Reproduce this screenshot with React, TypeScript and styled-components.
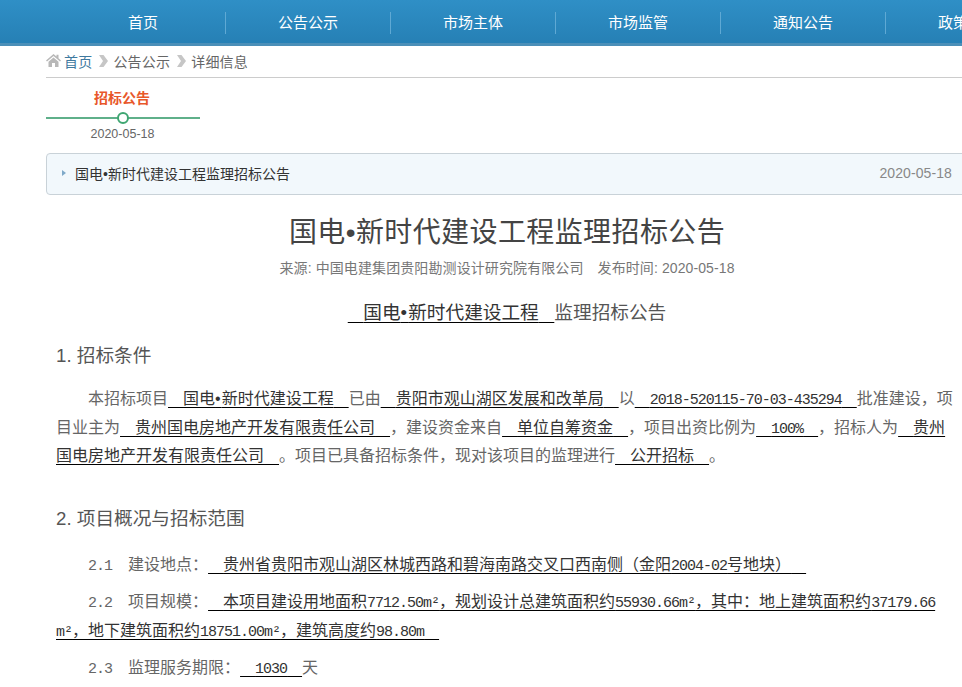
import React from "react";
import styled, { createGlobalStyle } from "styled-components";

const Global = createGlobalStyle`
  html, body { margin: 0; padding: 0; background: #fff; overflow: hidden; width: 962px; height: 687px; }
  body { font-family: "Liberation Sans", "Noto Sans CJK SC", sans-serif; color: #555; }
`;
const Page = styled.div`width: 962px; height: 687px; overflow: hidden;`;
const Nav = styled.nav`
  display: flex; height: 43px; padding-left: 61px; overflow: hidden;
  background: linear-gradient(#2f8fc6, #2680b5);
  border-bottom: 3px solid #4b8fb8;
`;
const NavItem = styled.a`
  flex: 0 0 165px; box-sizing: border-box; display: flex; align-items: center; justify-content: center;
  position: relative; color: #fff; font-size: 15px; height: 43px; padding-right: 1px;
  &:not(:last-child)::after {
    content: ""; position: absolute; right: 0; top: 12px; height: 22px; width: 1px; background: #5fa9d4;
  }
`;
const Content = styled.main`width: 930px; margin-left: 46px;`;
const Crumbs = styled.div`
  display: flex; align-items: center; box-sizing: border-box; height: 32px; padding-bottom: 2px;
  border-bottom: 1px solid #ccc; font-size: 14px; color: #666; width: 916px; letter-spacing: 0.2px;
`;
const CrumbLink = styled.span<{ $blue?: boolean }>`color: ${p => (p.$blue ? "#3f7a9f" : "#666")};`;
const HomeSvg = styled.svg`margin-right: 3px; flex: none;`;
const ChevronSvg = styled.svg`margin: 0 5px 0 7px; flex: none;`;
const Timeline = styled.div`width: 154px; margin-top: 10px; text-align: center;`;
const TimelineTitle = styled.div`font-size: 14px; font-weight: bold; color: #e8572a; line-height: 20px; margin-right: 2px;`;
const TimelineLine = styled.div`
  position: relative; height: 2px; background: #5fb08a; margin-top: 9px;
  &::after {
    content: ""; position: absolute; left: 71px; top: -5px; width: 8px; height: 8px;
    border: 2px solid #3fa672; border-radius: 50%; background: #fff;
  }
`;
const TimelineDate = styled.div`font-size: 12.5px; color: #666; margin-top: 8px; line-height: 14px; margin-right: 1px;`;
const NoticeCard = styled.div`
  display: flex; align-items: center; justify-content: space-between; box-sizing: border-box;
  height: 42px; margin-top: 12px; padding: 0 23px 2px 15px;
  background: #f2f8fc; border: 1px solid #c9d2d8; border-radius: 4px;
  font-size: 14px; color: #333;
`;
const NoticeTitle = styled.span`display: flex; align-items: center; gap: 9px;`;
const NoticeMark = styled.i`
  width: 0; height: 0; border-left: 4px solid #7fa9c9;
  border-top: 3.5px solid transparent; border-bottom: 3.5px solid transparent;
`;
const NoticeDate = styled.span`font-size: 14px; color: #888; letter-spacing: 0.1px;`;
const Article = styled.article`width: 922px;`;
const Title = styled.h1`
  margin: 18px 0 0; font-size: 28px; font-weight: 400; color: #444; text-align: center; line-height: 40px;
  letter-spacing: 0.4px;
`;
const Meta = styled.div`
  margin-top: 5px; font-size: 14px; color: #777; text-align: center; line-height: 20px; letter-spacing: 0.1px;
  span + span { margin-left: 14px; }
`;
const SubTitle = styled.h2`
  margin: 22px 0 0; font-size: 18.67px; font-weight: 400; color: #555; text-align: center; line-height: 26px;
`;
const Mark = styled.span`color: #333; text-decoration: underline; text-decoration-color: #000; text-underline-offset: 3px;`;
const Pad = styled.span`letter-spacing: 0.55px;`;
const Dot = styled.span`letter-spacing: 1px;`;
const Section = styled.h3<{ $gap: number }>`
  margin: ${p => p.$gap}px 0 0 10px; font-size: 18.67px; font-weight: 400; color: #555; line-height: 26px;
`;
const Para = styled.p<{ $gap: number }>`
  margin: ${p => p.$gap}px 0 0 10px; width: 900px; font-size: 16px; line-height: 28.5px; color: #666;
  text-indent: 32px;
`;
const Latin = styled.span`font-family: "Liberation Mono", monospace; font-size: 15px; letter-spacing: -1px; line-height: 1;`;

const T = ({ children }: { children: string }) => (
  <>
    {children.split(/([\x20-\x7e\u00a0\u00b2]+)/).map((s, i) =>
      i % 2 ? <Latin key={i}>{s}</Latin> : s
    )}
  </>
);
const SP = "\u00a0\u00a0\u00a0";
const U = ({ children }: { children: React.ReactNode }) => (
  <Mark><Pad>{SP}</Pad>{typeof children === "string" ? <T>{children}</T> : children}<Pad>{SP}</Pad></Mark>
);

const HomeIcon = () => (
  <HomeSvg width="15" height="13" viewBox="0 0 15 13" fill="#b8b8b8">
    <path d="M7.5 0 L0 6.5 L1 7.5 L7.5 2 L14 7.5 L15 6.5 L12.5 4.3 V0.8 H10.5 V2.6 Z" />
    <path d="M2.5 7.8 L7.5 3.5 L12.5 7.8 V13 H9 V9 H6 V13 H2.5 Z" />
  </HomeSvg>
);
const Chevron = () => (
  <ChevronSvg width="9" height="12" viewBox="0 0 9 12" fill="#c6c6c6">
    <path d="M0 0 H4.5 L9 6 L4.5 12 H0 L4 6 Z" />
  </ChevronSvg>
);

const navs = ["首页", "公告公示", "市场主体", "市场监管", "通知公告", "政策法规"];
const C = "\uff0c";
const K = "\uff1a";
const L = "\uff08";
const R = "\uff09";
const GAP = "\u00a0\u00a0";
const ProjectName = () => <>国电<Dot>•</Dot>新时代建设工程</>;

export default function App() {
  return (
    <Page>
      <Global />
      <Nav>{navs.map(n => <NavItem key={n}>{n}</NavItem>)}</Nav>
      <Content>
        <Crumbs>
          <HomeIcon />
          <CrumbLink $blue>首页</CrumbLink>
          <Chevron />
          <CrumbLink>公告公示</CrumbLink>
          <Chevron />
          <CrumbLink>详细信息</CrumbLink>
        </Crumbs>
        <Timeline>
          <TimelineTitle>招标公告</TimelineTitle>
          <TimelineLine />
          <TimelineDate>2020-05-18</TimelineDate>
        </Timeline>
        <NoticeCard>
          <NoticeTitle><NoticeMark />国电•新时代建设工程监理招标公告</NoticeTitle>
          <NoticeDate>2020-05-18</NoticeDate>
        </NoticeCard>
        <Article>
          <Title>国电•新时代建设工程监理招标公告</Title>
          <Meta><span>来源: 中国电建集团贵阳勘测设计研究院有限公司</span><span>发布时间: 2020-05-18</span></Meta>
          <SubTitle><Mark>{"\u00a0\u00a0\u00a0"}<ProjectName />{"\u00a0\u00a0\u00a0"}</Mark>监理招标公告</SubTitle>
          <Section $gap={17}>1. 招标条件</Section>
          <Para $gap={16}>
            本招标项目<U><ProjectName /></U>已由<U>贵阳市观山湖区发展和改革局</U>以<U>2018-520115-70-03-435294</U>{"批准建设" + C + "项目业主为"}<U>贵州国电房地产开发有限责任公司</U>{C + "建设资金来自"}<U>单位自筹资金</U>{C + "项目出资比例为"}<U>100%</U>{C + "招标人为"}<U>贵州国电房地产开发有限责任公司</U>{"。项目已具备招标条件" + C + "现对该项目的监理进行"}<U>公开招标</U>。
          </Para>
          <Section $gap={35}>2. 项目概况与招标范围</Section>
          <Para $gap={19}><T>2.1</T><Latin>{GAP}</Latin>{"建设地点" + K}<U>{"贵州省贵阳市观山湖区林城西路和碧海南路交叉口西南侧" + L + "金阳2004-02号地块" + R}</U></Para>
          <Para $gap={9.2}><T>2.2</T><Latin>{GAP}</Latin>{"项目规模" + K}<U>{"本项目建设用地面积7712.50m²" + C + "规划设计总建筑面积约55930.66m²" + C + "其中" + K + "地上建筑面积约37179.66\u200bm²" + C + "地下建筑面积约18751.00m²" + C + "建筑高度约98.80m"}</U></Para>
          <Para $gap={9.2}><T>2.3</T><Latin>{GAP}</Latin>{"监理服务期限" + K}<U>1030</U>天</Para>
        </Article>
      </Content>
    </Page>
  );
}
